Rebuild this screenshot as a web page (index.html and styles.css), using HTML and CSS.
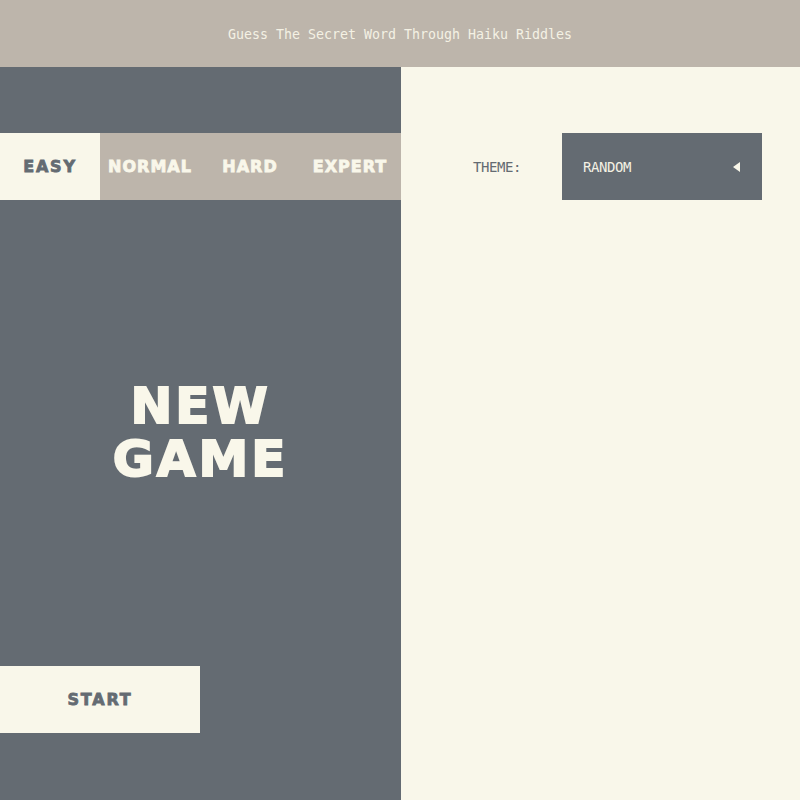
FILE: index.html
```html
<!DOCTYPE html>
<html>
<head>
<meta charset="utf-8">
<link rel="stylesheet" href="styles.css">
</head>
<body>
<header class="top">Guess The Secret Word Through Haiku Riddles</header>
<main class="main">
  <section class="left">
    <nav class="tabs">
      <div class="tab active">EASY</div>
      <div class="tab">NORMAL</div>
      <div class="tab">HARD</div>
      <div class="tab">EXPERT</div>
    </nav>
    <div class="title-wrap">
      <h1 class="title">NEW<br>GAME</h1>
    </div>
    <button class="start">START</button>
  </section>
  <section class="right">
    <div class="theme-row">
      <span class="theme-label">THEME:</span>
      <div class="select">
        <span>RANDOM</span>
        <span class="tri"></span>
      </div>
    </div>
  </section>
</main>
</body>
</html>
```
FILE: styles.css
```css
* { box-sizing: border-box; }
html, body { margin: 0; padding: 0; }
body {
  width: 800px;
  height: 800px;
  overflow: hidden;
  background: #f9f7ea;
  font-family: "DejaVu Sans Mono", monospace;
}
.top {
  height: 67px;
  background: #bdb5ab;
  color: #f4f1e4;
  font-size: 13.3px;
  display: flex;
  align-items: center;
  justify-content: center;
  padding-top: 1px;
}
.main {
  display: grid;
  grid-template-columns: 401px 1fr;
  height: 733px;
}
.left {
  background: #646b72;
  display: flex;
  flex-direction: column;
  padding-top: 66px;
  padding-bottom: 67px;
}
.tabs {
  display: flex;
  height: 67px;
  background: #bdb5ab;
}
.tab {
  width: 100px;
  display: flex;
  align-items: center;
  justify-content: center;
  font-family: "DejaVu Sans", sans-serif;
  font-weight: bold;
  font-size: 16px;
  letter-spacing: 1px;
  color: #f9f7ea;
  padding-bottom: 1px;
  -webkit-text-stroke: 0.8px currentColor;
}
.tab.active {
  background: #f9f7ea;
  color: #646b72;
  letter-spacing: 1.8px;
}
.title {
  margin: 0;
  text-align: center;
  font-family: "DejaVu Sans", sans-serif;
  font-weight: bold;
  font-size: 50px;
  line-height: 53px;
  letter-spacing: 3px;
  color: #f9f7ea;
  -webkit-text-stroke: 2px currentColor;
}
.title-wrap {
  flex: 1;
  display: flex;
  align-items: center;
  justify-content: center;
}
.start {
  width: 200px;
  height: 67px;
  border: none;
  background: #f9f7ea;
  color: #646b72;
  font-family: "DejaVu Sans", sans-serif;
  font-weight: bold;
  font-size: 16px;
  letter-spacing: 1.8px;
  -webkit-text-stroke: 0.8px currentColor;
  padding: 0;
}
.right {
  padding-top: 66px;
}
.theme-row {
  display: flex;
  align-items: center;
  height: 67px;
}
.theme-label {
  margin-left: 72px;
  width: 89px;
  color: #646b72;
  font-size: 14px;
  letter-spacing: -0.45px;
  padding-top: 1px;
}
.select {
  width: 200px;
  height: 67px;
  background: #646b72;
  color: #f4f1e4;
  font-size: 14px;
  letter-spacing: -0.45px;
  display: flex;
  align-items: center;
  justify-content: space-between;
  padding: 1px 22px 0 21px;
}
.tri {
  width: 0;
  height: 0;
  border-top: 5.5px solid transparent;
  border-bottom: 5.5px solid transparent;
  border-right: 7px solid #f9f7ea;
}
```
